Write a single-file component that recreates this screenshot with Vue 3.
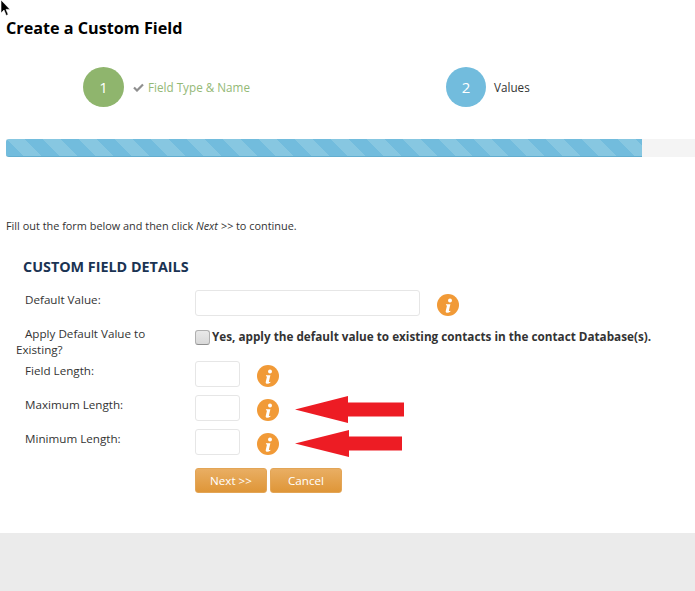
<script setup>
const rows = [
  { label: 'Field Length:' },
  { label: 'Maximum Length:' },
  { label: 'Minimum Length:' },
]
</script>

<template>
  <div class="page">
    <svg class="cursor" width="12" height="18" viewBox="0 0 12 18">
      <path d="M1 0v13l3-3 2.2 5.5 2-.9L6 9.4h4z" fill="#000" stroke="#fff" stroke-width=".6" />
    </svg>

    <main class="content">
      <h1 class="title">Create a Custom Field</h1>

      <div class="steps">
        <div class="step step-done">
          <span class="circle">1</span>
          <svg class="check" width="11" height="9" viewBox="0 0 11 9">
            <path d="M1 4.5l3 3 6-6" fill="none" stroke="#8f8f8f" stroke-width="2.2" />
          </svg>
          <span class="step-label">Field Type &amp; Name</span>
        </div>
        <div class="step step-current">
          <span class="circle">2</span>
          <span class="step-label">Values</span>
        </div>
      </div>

      <div class="progress">
        <div class="progress-fill"></div>
      </div>

      <p class="intro">Fill out the form below and then click <em>Next &gt;&gt;</em> to continue.</p>

      <section class="details">
        <h2 class="heading">CUSTOM FIELD DETAILS</h2>

        <div class="row row-default">
          <label class="label">Default Value:</label>
          <div class="field">
            <input class="input input-wide" type="text" />
            <svg class="info" width="22" height="22" viewBox="0 0 22 22">
              <circle cx="11" cy="11" r="11" fill="#f19a37" />
              <circle cx="13" cy="6.400" r="2" fill="#fff" />
              <path d="M9 10.200h4.400l-1.500 6.400c-.1.600.4.700 1.400.2l.2.700c-1.200 1-2.600 1.500-3.700 1.300-1-.2-1.300-.9-1-2l1.200-5.400-1.100-.2z" fill="#fff" />
            </svg>
          </div>
        </div>

        <div class="row row-apply">
          <label class="label">Apply Default Value to Existing?</label>
          <div class="field field-check">
            <input class="checkbox" type="checkbox" />
            <span class="check-text">Yes, apply the default value to existing contacts in the contact Database(s).</span>
          </div>
        </div>

        <div v-for="row in rows" :key="row.label" class="row row-small">
          <label class="label">{{ row.label }}</label>
          <div class="field">
            <input class="input input-small" type="text" />
            <svg class="info" width="22" height="22" viewBox="0 0 22 22">
              <circle cx="11" cy="11" r="11" fill="#f19a37" />
              <circle cx="13" cy="6.400" r="2" fill="#fff" />
              <path d="M9 10.200h4.400l-1.500 6.400c-.1.600.4.700 1.400.2l.2.700c-1.200 1-2.600 1.500-3.700 1.300-1-.2-1.300-.9-1-2l1.200-5.400-1.100-.2z" fill="#fff" />
            </svg>
          </div>
        </div>

        <div class="actions">
          <button class="btn" type="button">Next &gt;&gt;</button>
          <button class="btn" type="button">Cancel</button>
        </div>

        <svg class="arrow arrow-max" width="110" height="28" viewBox="0 0 110 28">
          <path d="M0 13.500L53 0v6.500h56v14H53V27z" fill="#ed1c24" />
        </svg>
        <svg class="arrow arrow-min" width="108" height="28" viewBox="0 0 108 28">
          <path d="M0 13.500L54 0v6.500h53v14H54V27z" fill="#ed1c24" />
        </svg>
      </section>
    </main>

    <footer class="footer"></footer>
  </div>
</template>

<style>
html, body {
  margin: 0;
  background: #fff;
}
</style>

<style scoped>
.page {
  position: relative;
  width: 695px;
  height: 591px;
  overflow: hidden;
  display: flex;
  flex-direction: column;
  font-family: "Open Sans", "Liberation Sans", sans-serif;
  color: #333;
}

.cursor {
  position: absolute;
  left: 0;
  top: 0;
}

.content {
  height: 533px;
  padding-top: 18px;
  box-sizing: border-box;
}

.title {
  margin: 0 0 0 6px;
  font-size: 16.200px;
  line-height: 21px;
  font-weight: 700;
  color: #000;
}

.steps {
  display: flex;
  margin-top: 28px;
  padding-left: 83px;
}

.step {
  display: flex;
  align-items: center;
  font-size: 11.700px;
}

.step-done {
  width: 363px;
}

.circle {
  width: 41px;
  height: 40px;
  border-radius: 50%;
  display: flex;
  align-items: center;
  justify-content: center;
  color: #fff;
  font-size: 15px;
}

.step-done .circle {
  background: #8fb56d;
}

.step-current .circle {
  width: 40px;
  background: #72bcdd;
}

.check {
  margin-left: 9px;
}

.step-done .step-label {
  margin-left: 4px;
  color: #94b976;
}

.step-current .step-label {
  margin-left: 8px;
  color: #333;
}

.progress {
  margin: 32px 0 0 6px;
  height: 18px;
  background: #f4f4f4;
}

.progress-fill {
  width: 636px;
  height: 18px;
  box-sizing: border-box;
  border-radius: 3px 0 0 3px;
  border-bottom: 1px solid #62aed0;
  background: repeating-linear-gradient(45deg, #72bcdd 0 12.700px, #87c7e1 12.700px 25.400px);
}

.intro {
  margin: 61px 0 0 6px;
  font-size: 10.900px;
  line-height: 15px;
}

.details {
  position: relative;
  margin-top: 24px;
}

.heading {
  margin: 0 0 14px 23px;
  font-size: 14.350px;
  line-height: 19px;
  font-weight: 700;
  color: #1a3353;
}

.row {
  display: flex;
  font-size: 11.650px;
  line-height: 16px;
}

.label {
  width: 179px;
  margin-left: 16px;
  padding: 2px 30px 0 0;
  flex: none;
  text-indent: 9px;
  box-sizing: border-box;
}

.row-default {
  height: 26px;
}

.row-apply {
  margin-top: 14px;
  height: 31px;
}

.row-apply .label {
  margin-top: -6px;
}

.row-small {
  height: 26px;
  margin-bottom: 8px;
}

.field {
  display: flex;
  align-items: center;
}

.field-check {
  align-items: flex-start;
  height: 16px;
}

.input {
  box-sizing: border-box;
  height: 26px;
  padding: 0;
  background: #fff;
  border: 1px solid #e6e6e6;
  border-radius: 3px;
}

.input-wide {
  width: 225px;
}

.input-small {
  width: 45px;
}

.info {
  margin-left: 17px;
  margin-top: 4px;
  flex: none;
}

.checkbox {
  appearance: none;
  margin: 0;
  width: 15px;
  height: 15px;
  background: linear-gradient(#e9e9e9, #d9d9d9);
  border: 1px solid #b0b0b0;
  border-bottom-color: #8f8f8f;
  border-radius: 3px;
}

.check-text {
  margin: -2px 0 0 2px;
  font-size: 11.730px;
  font-weight: 700;
  color: #333;
  white-space: nowrap;
}

.actions {
  display: flex;
  gap: 3px;
  margin: 13px 0 0 195px;
}

.btn {
  width: 72px;
  height: 25px;
  padding: 0;
  border: 1px solid #e3a556;
  border-radius: 3px;
  background: linear-gradient(#e9ae63, #df9638);
  color: #fff;
  font-family: inherit;
  font-size: 11.650px;
}

.arrow {
  position: absolute;
}

.arrow-max {
  left: 295px;
  top: 139px;
}

.arrow-min {
  left: 295px;
  top: 173px;
}

.footer {
  flex: 1;
  background: #ebebeb;
}
</style>
